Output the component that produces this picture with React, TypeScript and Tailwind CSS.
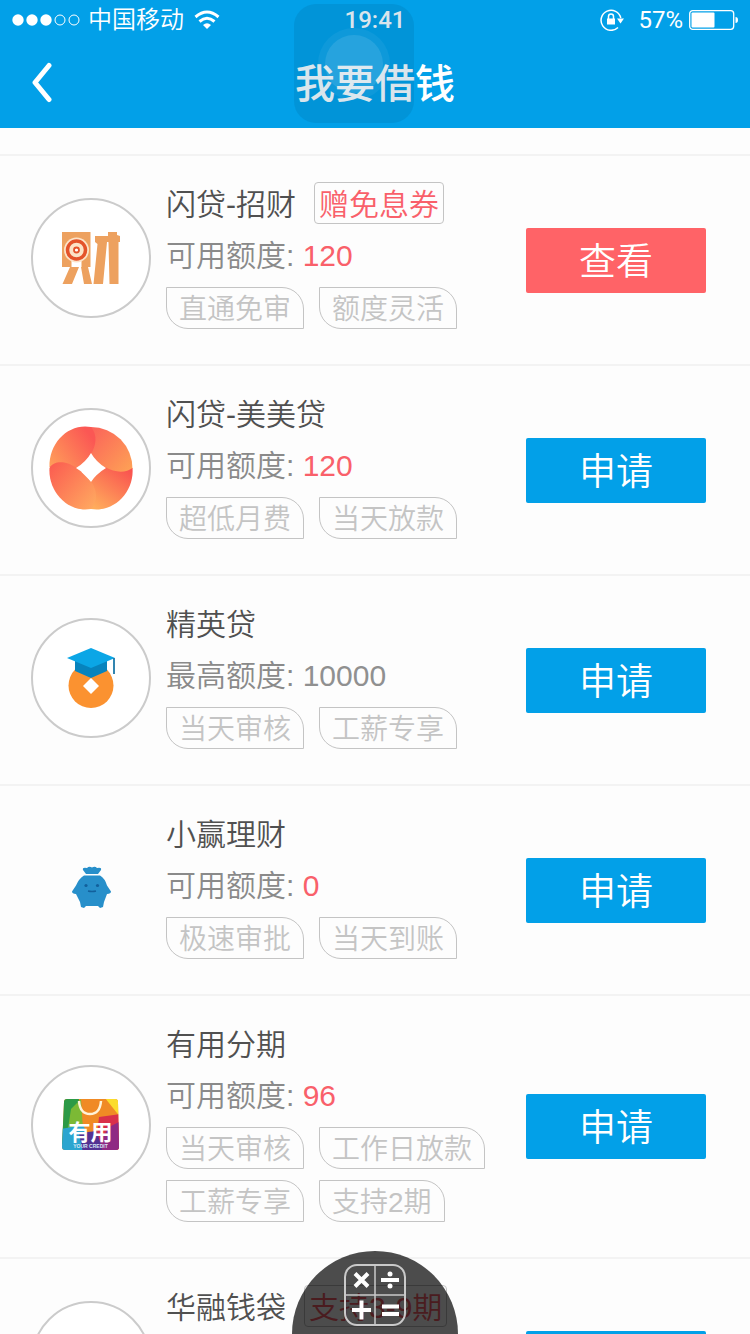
import type { ReactNode } from "react";

type Product = {
  name: string;
  promo?: string;
  limit?: { label: string; value: string; highlight: boolean };
  tags: string[];
  action: string;
  primary?: boolean;
  ring: boolean;
  logo?: ReactNode;
};

const TargetLogo = () => (
  <svg viewBox="0 0 116 116" className="size-full" aria-hidden="true">
    <g fill="#eda15f">
      <path d="M29 32h28.500v35H29z" />
      <path d="M37 67h9l-7 17h-9.500zM48 67h7l4 17h-8z" />
      <path d="M62 36h12v6l-4 42h-9.500l4-40-2.500-2z" />
      <path d="M75 36V32h9v3l3 1v6h-1.500v42h-9l-1-41z" />
      <path d="M74 36h4v6h-4z" />
    </g>
    <path d="M38.500 60h10v7h-10z" fill="#fff" />
    <circle cx="43.500" cy="50" r="12.500" fill="#fce3c8" />
    <circle cx="43.500" cy="50" r="9" fill="none" stroke="#e4532b" strokeWidth="3.500" />
    <circle cx="43.500" cy="50" r="2.500" fill="#fff" stroke="#e4532b" strokeWidth="1.800" />
  </svg>
);

const PetalLogo = () => (
  <svg viewBox="0 0 116 116" className="size-full" aria-hidden="true">
    <defs>
      <linearGradient id="petalA" x1="0.900" y1="0.200" x2="0" y2="0.900">
        <stop offset="0" stopColor="#fb5754" />
        <stop offset="1" stopColor="#ffa35a" />
      </linearGradient>
      <linearGradient id="petalB" x1="0" y1="0" x2="0.900" y2="1">
        <stop offset="0" stopColor="#fb625a" />
        <stop offset="1" stopColor="#fea455" />
      </linearGradient>
      <linearGradient id="petalC" x1="0.900" y1="0" x2="0.200" y2="1">
        <stop offset="0" stopColor="#f9504f" />
        <stop offset="1" stopColor="#ffac5c" />
      </linearGradient>
      <linearGradient id="petalD" x1="0" y1="0" x2="1" y2="0.900">
        <stop offset="0" stopColor="#fb5a50" />
        <stop offset="1" stopColor="#ffa860" />
      </linearGradient>
    </defs>
    <path d="M58 17A41.500 41.500 0 0 1 99.500 59L80 68 58 58z" fill="url(#petalB)" />
    <path d="M58 17C36 13 16 32 16.500 57L40 66l18-8V44c5-8 7-19 0-27z" fill="url(#petalA)" />
    <path d="M99.500 58c2 24-19 45-41.500 41L56 72l16-15c10 6 21 6 27.500 1z" fill="url(#petalC)" />
    <path d="M16.500 58c3-6 12-7 20-4l8 4 14 14c6 9 6 20-.5 27-23 4-43-17-41.500-41z" fill="url(#petalD)" />
    <path d="M58 43q5 9 15 15-10 6-15 14-5-8-15-14 10-6 15-15z" fill="#fff" />
  </svg>
);

const GraduateLogo = () => (
  <svg viewBox="0 0 116 116" className="size-full" aria-hidden="true">
    <circle cx="58" cy="65.500" r="22.500" fill="#fb9230" />
    <path d="M42 40h32v11l-16 7-16-7z" fill="#0783bd" />
    <path d="M58 28l24 10-24 10-24-10z" fill="#0ba6e6" />
    <path d="M81 38v16" stroke="#1c78a8" strokeWidth="1.800" />
    <path d="M58 58l8 8-8 8-8-8z" fill="#fff" />
  </svg>
);

const PouchLogo = () => (
  <svg viewBox="0 0 120 120" className="size-full" aria-hidden="true">
    <g fill="#278fca">
      <path d="M52 42q-1-3 4-2 2-2 5-.5 3-1.500 5 .5 5-1 4 2l-3 4H55z" />
      <path d="M53 47.500h16q5 3 7 10l4 6q0 2-4 2.500l-3 8-1 5-3 1-2-2H55l-2 2-3-1-1-5-4-8q-4-.5-4-2.500l4-6q3-7 8-10z" />
    </g>
    <circle cx="55" cy="57.500" r="1.600" fill="#12609c" />
    <circle cx="66.500" cy="57.500" r="1.600" fill="#12609c" />
    <path d="M57 63q4 1 8 0" stroke="#12609c" fill="none" strokeWidth="1.500" />
  </svg>
);

const BagLogo = () => (
  <svg viewBox="0 0 116 116" className="size-full" aria-hidden="true">
    <defs>
      <clipPath id="bagShape">
        <path d="M34 32h48q3 0 3 3l1 45q0 3-3 3H32q-3 0-3-3l2-45q0-3 3-3z" />
      </clipPath>
    </defs>
    <g clipPath="url(#bagShape)">
      <path d="M28 31h60v54H28z" fill="#f08a25" />
      <path d="M28 31h18l-2 30-16 18z" fill="#2d9a46" />
      <path d="M38 42l10-10 2 30-16 6z" fill="#7cb935" />
      <path d="M72 31h16v20z" fill="#fbdc2c" />
      <path d="M66 50l22-3v39H62z" fill="#d9304a" />
      <path d="M76 60l12-6v32H60z" fill="#8f2a83" />
      <path d="M28 62l22-4 14 28H28z" fill="#2ba5cf" />
      <path d="M46 66l18-2 6 22H50z" fill="#543292" />
    </g>
    <path d="M46 34q1 13 11 13t11-13" fill="none" stroke="#fff3d8" strokeWidth="2.500" />
    <text x="57.500" y="73" textAnchor="middle" fontSize="22" fontWeight="700" fill="#fff">有用</text>
    <text x="57.500" y="81" textAnchor="middle" fontSize="5" fontWeight="700" fill="#d9e6f5">YOUR CREDIT</text>
  </svg>
);

const products: Product[] = [
  {
    name: "闪贷-招财",
    promo: "赠免息券",
    limit: { label: "可用额度:", value: "120", highlight: true },
    tags: ["直通免审", "额度灵活"],
    action: "查看",
    primary: true,
    ring: true,
    logo: <TargetLogo />,
  },
  {
    name: "闪贷-美美贷",
    limit: { label: "可用额度:", value: "120", highlight: true },
    tags: ["超低月费", "当天放款"],
    action: "申请",
    ring: true,
    logo: <PetalLogo />,
  },
  {
    name: "精英贷",
    limit: { label: "最高额度:", value: "10000", highlight: false },
    tags: ["当天审核", "工薪专享"],
    action: "申请",
    ring: true,
    logo: <GraduateLogo />,
  },
  {
    name: "小赢理财",
    limit: { label: "可用额度:", value: "0", highlight: true },
    tags: ["极速审批", "当天到账"],
    action: "申请",
    ring: false,
    logo: <PouchLogo />,
  },
  {
    name: "有用分期",
    limit: { label: "可用额度:", value: "96", highlight: true },
    tags: ["当天审核", "工作日放款", "工薪专享", "支持2期"],
    action: "申请",
    ring: true,
    logo: <BagLogo />,
  },
  { name: "华融钱袋", promo: "支持3-9期", tags: [], action: "申请", ring: true },
];

const StatusBar = () => (
  <div className="grid h-10 grid-cols-[1fr_auto_1fr] items-center px-3 font-['Roboto','Noto_Sans_CJK_SC',sans-serif] text-2xl leading-10">
    <div className="flex items-center gap-2">
      <svg viewBox="0 0 68 12" className="h-3 w-[68px]" aria-hidden="true">
        <g fill="#fff">
          <circle cx="6" cy="6" r="5.700" />
          <circle cx="20" cy="6" r="5.700" />
          <circle cx="34" cy="6" r="5.700" />
        </g>
        <g fill="none" stroke="#fff" strokeWidth="1">
          <circle cx="48" cy="6" r="5" />
          <circle cx="62" cy="6" r="5" />
        </g>
      </svg>
      <span className="font-[350]">中国移动</span>
      <svg viewBox="0 0 26 20" className="ml-[2px] h-5 w-[26px]" fill="none" stroke="#fff" strokeWidth="3" aria-hidden="true">
        <path d="M1.500 7Q13-3 24.500 7" />
        <path d="M5.500 11.500q7.500-6.500 15 0" />
        <path d="M9 15q4-3.500 8 0l-4 4z" fill="#fff" stroke="none" />
      </svg>
    </div>
    <time className="font-medium">19:41</time>
    <div className="flex items-center justify-end gap-[6px]">
      <svg viewBox="0 0 24 22" className="mr-2 h-[22px] w-6" fill="none" stroke="#fff" aria-hidden="true">
        <path d="M18 18.500A10 10 0 1 1 20.800 9" strokeWidth="1.500" />
        <path d="M17 9.500h7l-3.500 5z" fill="#fff" stroke="none" />
        <path d="M7 9.500h8v6H7z" fill="#fff" stroke="none" />
        <path d="M8.500 10V7.500a2.500 2.500 0 0 1 5 0V10" strokeWidth="1.500" />
      </svg>
      <span>57%</span>
      <svg viewBox="0 0 49 20" className="h-5 w-[49px]" aria-hidden="true">
        <rect x="0.700" y="0.700" width="44" height="18.600" rx="3" fill="none" stroke="#fff" strokeWidth="1.300" />
        <rect x="2.500" y="2.500" width="23" height="15" rx="1" fill="#fff" />
        <path d="M46.500 7q2.500 0 2.500 3t-2.500 3z" fill="#fff" />
      </svg>
    </div>
  </div>
);

const ProductRow = ({ item }: { item: Product }) => (
  <li className="flex min-h-[210px] items-center border-t-2 border-[#f3f3f3] pr-11 pl-[31px]">
    <div
      className={
        item.ring
          ? "mb-1 size-[120px] shrink-0 rounded-full border-2 border-[#cbcbcb] bg-white"
          : "mb-1 size-[120px] shrink-0"
      }
    >
      {item.logo}
    </div>
    <div className="ml-[15px] flex min-w-0 flex-1 flex-col gap-[10px] self-start pt-[26px] pb-[35px]">
      <div className="flex h-[42px] items-center gap-[18px] text-[30px] leading-9 whitespace-nowrap">
        <h2 className="pt-1 font-[350] text-[#505050]">{item.name}</h2>
        {item.promo && (
          <span className="rounded-sm border border-[#c4c4c4] px-1 pt-1 font-[350] text-[#f9606a]">{item.promo}</span>
        )}
      </div>
      {item.limit && (
        <p className="h-[43px] text-[30px] leading-[43px] font-[350] whitespace-nowrap text-[#8a8a8a]">
          {item.limit.label}{" "}
          <span className={item.limit.highlight ? "text-[#f9606a]" : "text-[#909090]"}>{item.limit.value}</span>
        </p>
      )}
      {item.tags.length > 0 && (
        <ul className="flex flex-wrap gap-x-[15px] gap-y-[11px]">
          {item.tags.map((tag) => (
            <li
              key={tag}
              className="rounded-tr-[22px] rounded-bl-[22px] border border-[#c4c4c4] px-3 pt-1 text-[28px] leading-9 font-[350] whitespace-nowrap text-[#c4c4c4]"
            >
              {tag}
            </li>
          ))}
        </ul>
      )}
    </div>
    <button
      type="button"
      className={
        item.primary
          ? "h-[65px] w-[180px] shrink-0 rounded-xs bg-[#ff6367] pt-1 text-[37px] leading-none font-[350] text-white"
          : "h-[65px] w-[180px] shrink-0 rounded-xs bg-[#02a0e8] pt-1 text-[37px] leading-none font-[350] text-white"
      }
    >
      {item.action}
    </button>
  </li>
);

export default function App() {
  return (
    <div className="relative flex h-screen flex-col overflow-hidden bg-[#fdfdfd] font-['Liberation_Sans','Noto_Sans_CJK_SC',sans-serif]">
      <header className="relative shrink-0 bg-[#02a0e8] text-white">
        <StatusBar />
        <div className="grid h-[88px] grid-cols-[1fr_auto_1fr] items-center">
          <button type="button" aria-label="返回" className="flex h-full w-20 items-center pl-[30px]">
            <svg viewBox="0 0 24 44" className="h-11 w-6" fill="none" stroke="#fff" strokeWidth="5" strokeLinecap="round" strokeLinejoin="round" aria-hidden="true">
              <path d="M19 3.500L5 20.500l14 17" />
            </svg>
          </button>
          <h1 className="text-[40px] leading-[88px] font-medium">我要借钱</h1>
        </div>
        <div className="pointer-events-none absolute top-1 left-1/2 -ml-[81px] flex h-[119px] w-[120px] items-center justify-center rounded-[22px] bg-[#004f80]/15">
          <div className="flex size-[72px] items-center justify-center rounded-full bg-white/5">
            <div className="size-[58px] rounded-full bg-white/10" />
          </div>
        </div>
      </header>
      <main className="min-h-0 flex-1 overflow-y-auto pt-[26px] [scrollbar-width:none]">
        <ul>
          {products.map((item) => (
            <ProductRow key={item.name} item={item} />
          ))}
        </ul>
      </main>
      <button
        type="button"
        aria-label="计算器"
        className="absolute bottom-0 left-1/2 flex h-[83px] w-[166px] -translate-x-1/2 justify-center rounded-t-full bg-black/70 pt-[13px]"
      >
        <svg viewBox="0 0 62 62" className="size-[62px]" fill="none" stroke="#fff" aria-hidden="true">
          <g stroke="#c9c9c9" strokeWidth="2">
            <rect x="1" y="1" width="60" height="60" rx="12" />
            <path d="M31 1v60M1 31h60" strokeWidth="1.500" />
          </g>
          <g strokeWidth="4">
            <path d="M11 9.500l13 13M24 9.500l-13 13M37 16h18M17.500 36.500v19M8 46h19M38 42.500h17M38 50h17" />
          </g>
          <circle cx="46" cy="10" r="2.500" fill="#fff" stroke="none" />
          <circle cx="46" cy="22" r="2.500" fill="#fff" stroke="none" />
        </svg>
      </button>
    </div>
  );
}
